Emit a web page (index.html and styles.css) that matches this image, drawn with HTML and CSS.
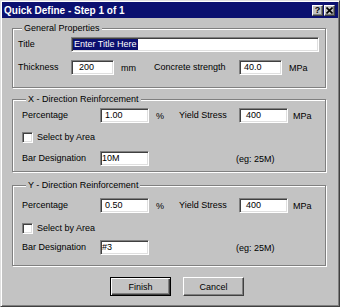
FILE: index.html
```html
<!DOCTYPE html>
<html lang="en">
<head>
    <meta charset="UTF-8">
    <title>Quick Define - Step 1 of 1</title>
    <link rel="stylesheet" href="styles.css">
</head>
<body>
    <div class="window">
        <div class="titlebar">
            <span class="caption">Quick Define - Step 1 of 1</span>
            <div class="caption-buttons">
                <div class="cap-btn help">?</div>
                <div class="cap-btn close">
                    <svg width="7" height="7" viewBox="0 0 7 7">
                        <path d="M0.5 0.5 L6.5 6.5 M6.5 0.5 L0.5 6.5" stroke="#000" stroke-width="1.6"/>
                    </svg>
                </div>
            </div>
        </div>

        <fieldset class="group general">
            <legend>General Properties</legend>
            <div class="row">
                <span class="label gen-label">Title</span>
                <div class="field title-field"><span class="selected">Enter Title Here</span></div>
            </div>
            <div class="row row-gap">
                <span class="label gen-label">Thickness</span>
                <div class="field short thick">200</div>
                <span class="unit mm">mm</span>
                <span class="label conc">Concrete strength</span>
                <div class="field short">40.0</div>
                <span class="unit mpa">MPa</span>
            </div>
        </fieldset>

        <fieldset class="group rebar x-dir">
            <legend>X - Direction Reinforcement</legend>
            <div class="row">
                <span class="label bar-label">Percentage</span>
                <div class="field mid">1.00</div>
                <span class="unit pct">%</span>
                <span class="label yield">Yield Stress</span>
                <div class="field mid wide-pad">400</div>
                <span class="unit mpa2">MPa</span>
            </div>
            <div class="row check-row">
                <span class="checkbox"></span>
                <span class="label">Select by Area</span>
            </div>
            <div class="row">
                <span class="label bar-label">Bar Designation</span>
                <div class="field mid tight">10M</div>
                <span class="note">(eg: 25M)</span>
            </div>
        </fieldset>

        <fieldset class="group rebar y-dir">
            <legend>Y - Direction Reinforcement</legend>
            <div class="row">
                <span class="label bar-label">Percentage</span>
                <div class="field mid">0.50</div>
                <span class="unit pct">%</span>
                <span class="label yield">Yield Stress</span>
                <div class="field mid wide-pad">400</div>
                <span class="unit mpa2">MPa</span>
            </div>
            <div class="row check-row">
                <span class="checkbox"></span>
                <span class="label">Select by Area</span>
            </div>
            <div class="row">
                <span class="label bar-label">Bar Designation</span>
                <div class="field mid tight">#3</div>
                <span class="note">(eg: 25M)</span>
            </div>
        </fieldset>

        <div class="buttons">
            <button class="btn default">Finish</button>
            <button class="btn">Cancel</button>
        </div>
    </div>
</body>
</html>
```

FILE: styles.css
```css
* {
    box-sizing: border-box;
}
body {
    margin: 0;
    font-family: 'Liberation Sans', Arial, sans-serif;
    font-size: 9px;
    color: #000;
    background: #c3c3c3;
}
.window {
    width: 340px;
    height: 307px;
    padding: 1px;
    background: #c3c3c3;
    border: 1px solid;
    border-color: #dfdfdf #404040 #404040 #dfdfdf;
    box-shadow: inset 1px 1px #fff, inset -1px -1px #808080;
}
.titlebar {
    height: 16px;
    background: #0b1070;
    color: #fff;
    display: flex;
    align-items: center;
    justify-content: space-between;
    padding: 0 3px 0 2px;
}
.caption {
    font-size: 10px;
    font-weight: bold;
}
.caption-buttons {
    display: flex;
    gap: 1px;
}
.cap-btn {
    width: 11px;
    height: 11px;
    background: #c3c3c3;
    border: 1px solid;
    border-color: #fff #404040 #404040 #fff;
    box-shadow: inset -1px -1px #808080;
    color: #000;
    font-weight: bold;
    font-size: 9px;
    line-height: 9px;
    display: flex;
    align-items: center;
    justify-content: center;
}
.group {
    margin: 0 12px 0 10px;
    padding: 3px 5px 0;
    min-width: 0;
    border: 1px solid #808080;
    box-shadow: inset 1px 1px #fff, 1px 1px #fff;
}
.group legend {
    margin-left: 4px;
    padding: 0 2px;
    line-height: 11px;
    background: #c3c3c3;
}
.general {
    margin-top: 5px;
    padding-bottom: 12px;
}
.rebar {
    padding-left: 9px;
}
.x-dir {
    margin-top: 6px;
    padding-bottom: 5px;
}
.y-dir {
    margin-top: 8px;
    padding-top: 7px;
    padding-bottom: 10px;
}
.row {
    display: flex;
    align-items: center;
    height: 15px;
    white-space: nowrap;
}
.row-gap {
    margin-top: 8px;
}
.check-row {
    margin: 7px 0 6px;
}
.y-dir .check-row {
    margin: 8px 0 4px;
}
.label {
    line-height: 11px;
}
.gen-label {
    width: 53px;
}
.bar-label {
    width: 78px;
}
.field {
    height: 15px;
    background: #fff;
    border: 1px solid;
    border-color: #808080 #fff #fff #808080;
    box-shadow: inset 1px 1px #404040, inset -1px -1px #dfdfdf;
    padding: 0 4px;
    line-height: 13px;
}
.title-field {
    width: 248px;
    padding-left: 1px;
}
.selected {
    background: #0b1070;
    color: #fff;
    padding: 0 1px;
    line-height: 11px;
    display: inline-block;
}
.short {
    width: 43px;
}
.thick {
    padding-left: 7px;
}
.mid {
    width: 49px;
}
.wide-pad {
    padding-left: 6px;
}
.tight {
    padding-left: 1px;
}
.mm {
    margin-left: 7px;
    width: 33px;
}
.conc {
    width: 85px;
}
.mpa {
    margin-left: 7px;
}
.pct {
    margin-left: 7px;
    width: 23px;
}
.yield {
    width: 60px;
}
.mpa2 {
    margin-left: 5px;
}
.checkbox {
    width: 11px;
    height: 11px;
    margin-right: 4px;
    background: #fff;
    border: 1px solid;
    border-color: #808080 #fff #fff #808080;
    box-shadow: inset 1px 1px #404040, inset -1px -1px #dfdfdf;
}
.note {
    margin-left: 87px;
}
.buttons {
    display: flex;
    gap: 12px;
    padding-left: 108px;
    margin-top: 11px;
}
.btn {
    width: 61px;
    height: 19px;
    padding: 0;
    font-family: inherit;
    font-size: 9px;
    color: #000;
    background: #c3c3c3;
    border: 1px solid;
    border-color: #fff #404040 #404040 #fff;
    box-shadow: inset -1px -1px #808080;
}
.btn.default {
    border: 1px solid #000;
    box-shadow: inset 1px 1px #fff, inset -1px -1px #404040, inset -2px -2px #808080;
}
```
